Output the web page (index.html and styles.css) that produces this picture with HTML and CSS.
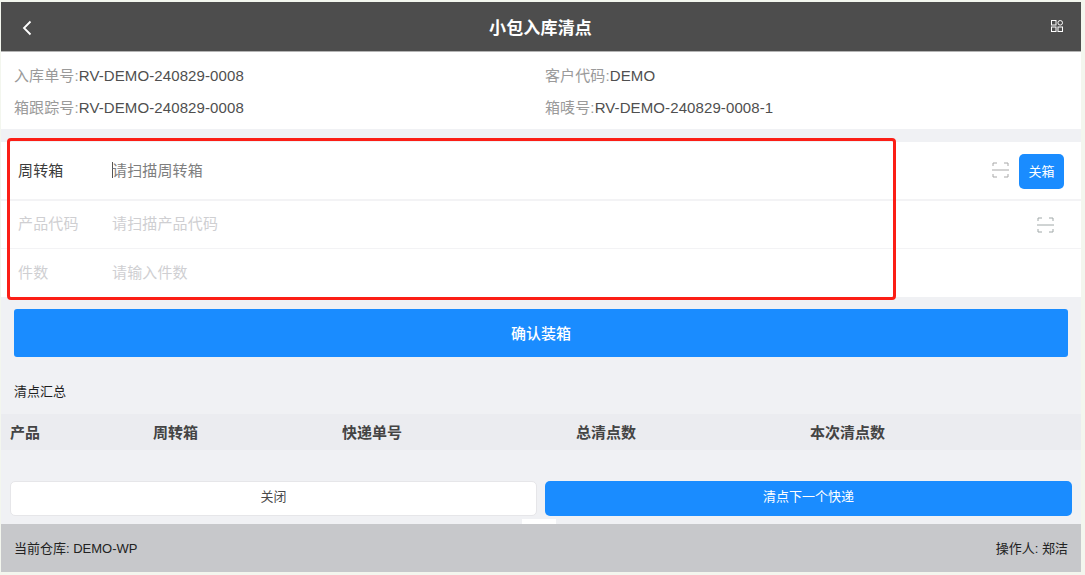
FILE: index.html
```html
<!DOCTYPE html>
<html lang="zh-CN">
<head>
<meta charset="utf-8">
<title>小包入库清点</title>
<link rel="stylesheet" href="styles.css">
</head>
<body>
<div class="app">
  <header class="nav">
    <svg class="back" width="12" height="16" viewBox="0 0 12 16"><path d="M9.5 1.5 3 8l6.5 6.5" fill="none" stroke="#fff" stroke-width="1.8"/></svg>
    <h1 class="title">小包入库清点</h1>
    <svg class="grid-icon" width="12" height="12" viewBox="0 0 12 12" fill="none" stroke="#fff" stroke-width="1"><rect x="0.5" y="0.5" width="4.5" height="4.5"/><circle cx="9.2" cy="2.8" r="2.3"/><rect x="0.5" y="7" width="4.5" height="4.5"/><rect x="7" y="7" width="4.5" height="4.5"/></svg>
  </header>
  <section class="info">
    <div class="info-item"><span class="k">入库单号:</span>RV-DEMO-240829-0008</div>
    <div class="info-item"><span class="k">客户代码:</span>DEMO</div>
    <div class="info-item"><span class="k">箱跟踪号:</span>RV-DEMO-240829-0008</div>
    <div class="info-item"><span class="k">箱唛号:</span>RV-DEMO-240829-0008-1</div>
  </section>
  <section class="form">
    <div class="row row-a">
      <span class="label">周转箱</span>
      <span class="input"><i class="caret"></i>请扫描周转箱</span>
      <svg class="scan" width="17" height="16" viewBox="0 0 17 16" fill="none" stroke="#a8a8a8" stroke-width="1"><path d="M1 4V1h4M12 1h4v3M1 12v3h4M12 15h4v-3M0 8h17"/></svg>
      <button class="close-box">关箱</button>
    </div>
    <div class="row row-b">
      <span class="label off">产品代码</span>
      <span class="input off">请扫描产品代码</span>
      <svg class="scan scan-b" width="17" height="16" viewBox="0 0 17 16" fill="none" stroke="#a0a8a8" stroke-width="1"><path d="M1 4V1h4M12 1h4v3M1 12v3h4M12 15h4v-3M0 8h17"/></svg>
    </div>
    <div class="row row-c">
      <span class="label off">件数</span>
      <span class="input off">请输入件数</span>
    </div>
  </section>
  <div class="highlight"></div>
  <button class="confirm">确认装箱</button>
  <div class="summary">清点汇总</div>
  <div class="thead">
    <span class="c1">产品</span><span class="c2">周转箱</span><span class="c3">快递单号</span><span class="c4">总清点数</span><span class="c5">本次清点数</span>
  </div>
  <div class="actions">
    <button class="btn btn-plain">关闭</button>
    <button class="btn btn-primary">清点下一个快递</button>
  </div>
  <div class="tabnub"></div>
  <footer class="foot"><span>当前仓库: DEMO-WP</span><span>操作人: 郑洁</span></footer>
</div>
</body>
</html>
```
FILE: styles.css
```css
* { box-sizing: border-box; }
html, body { margin: 0; padding: 0; }
body {
  width: 1085px; height: 575px; overflow: hidden;
  background: #f3f6ee;
  font-family: "Liberation Sans", "Noto Sans CJK SC", sans-serif;
  padding: 2px 0 0 1px;
}
.app {
  position: relative;
  width: 1080px; height: 570px;
  background: #f0f1f4;
  display: flex; flex-direction: column;
}
button { font-family: inherit; border: 0; padding: 0; }
.nav {
  height: 50px; flex: none;
  background: #4d4d4d;
  border-bottom: 1px solid #b4b4b4;
  display: flex; align-items: center; justify-content: space-between;
  padding: 0 18px 0 20px;
}
.back { margin-top: 2px; }
.title { margin: -1px 0 0 -3px; font-size: 17px; font-weight: 700; color: #fff; letter-spacing: 0.15px; }
.grid-icon { margin-top: -1px; }
.info {
  height: 77px; flex: none;
  background: #fff;
  display: grid; grid-template-columns: 531px 1fr;
  grid-auto-rows: 32px; align-content: center;
  padding: 2px 13px 0;
  font-size: 15px; color: #4f4f4f; line-height: 32px;
  letter-spacing: 0.1px;
}
.k { color: #9a9a9a; letter-spacing: 0.12px; }
.form {
  margin-top: 13px; height: 155px; flex: none;
  background: #fff;
}
.row { display: flex; align-items: center; padding-left: 17px; }
.row-a { height: 59px; border-bottom: 2px solid #f3f3f5; padding-bottom: 2px; }
.row-b { height: 48px; border-bottom: 1px solid #f3f3f5; padding-bottom: 4px; }
.row-c { height: 48px; padding-bottom: 4px; }
.label { width: 94px; font-size: 15px; color: #3c3c3c; flex: none; letter-spacing: 0.15px; }
.input { font-size: 15px; color: #7e7e7e; flex: 1; display: flex; align-items: center; letter-spacing: 0.15px; }
.off { color: #cfcfd2; }
.caret { width: 1px; height: 16px; background: #555; display: block; margin-right: -1px; }
.scan { flex: none; margin: 1px 10px 0 0; }
.scan-b { margin: 4px 27px 0 0; }
.close-box {
  width: 45px; height: 35px; margin: 4px 17px 0 0; flex: none;
  background: #1a8cff; color: #fff; font-size: 13px; border-radius: 5px;
  padding-bottom: 3px;
}
.highlight {
  position: absolute; left: 6px; top: 136px;
  width: 889px; height: 162px;
  border: 3px solid #fb1e16; border-radius: 4px;
}
.confirm {
  margin: 12px 0 0 13px; width: 1054px; height: 48px; flex: none;
  background: #1a8cff; color: #fff; font-size: 15px; font-weight: 500;
  border-radius: 3px; padding-bottom: 2px;
}
.summary { margin: 27px 0 0 13px; height: 16px; line-height: 16px; font-size: 13px; color: #1f1f1f; }
.thead {
  margin-top: 14px; height: 36px; flex: none;
  background: #ebecf0;
  display: flex; align-items: center;
  font-size: 15px; font-weight: 700; color: #444;
  padding-bottom: 2px;
}
.thead span { display: block; flex: none; }
.c1 { width: 143px; padding-left: 9px; }
.c2 { width: 189px; padding-left: 9px; }
.c3 { width: 234px; padding-left: 9px; }
.c4 { width: 234px; padding-left: 9px; }
.c5 { padding-left: 9px; }
.actions {
  margin-top: 31px; padding: 0 9px 0 9px;
  display: grid; grid-template-columns: 527px 527px; column-gap: 8px;
}
.btn { height: 35px; font-size: 13px; border-radius: 5px; padding-bottom: 6px; }
.btn-plain { background: #fff; border: 1px solid #e6e6e9; color: #4a4a4a; }
.btn-primary { background: #1a8cff; color: #fff; }
.tabnub { height: 8px; width: 34px; margin: 3px 0 0 521px; background: #fff; align-self: flex-start; }
.foot {
  height: 48px; flex: none; margin-top: -3px;
  background: #c7c8cb; color: #222; font-size: 13px;
  display: flex; align-items: center; justify-content: space-between;
  padding: 0 13px 2px;
  position: relative;
}
```
